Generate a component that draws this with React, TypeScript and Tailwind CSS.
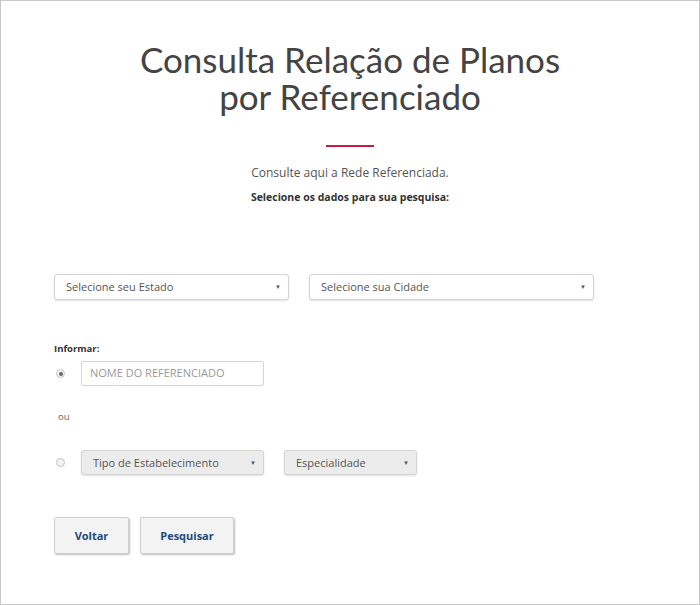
import React from 'react';

function Caret() {
  return <span className="text-[6px] text-[#555] leading-none">▼</span>;
}

function SelectBox({ label, className, gray }: { label: string; className: string; gray?: boolean }) {
  return (
    <div
      className={`flex items-center justify-between rounded-[3px] border border-[#d4d4d4] pl-[11px] pr-[7px] text-[11px] text-[#555] shadow-[0_1px_2px_rgba(0,0,0,0.12)] ${gray ? 'bg-[#ececec]' : 'bg-white'} ${className}`}
    >
      <span>{label}</span>
      <Caret />
    </div>
  );
}

function Radio({ checked }: { checked?: boolean }) {
  return (
    <span className="flex h-[9px] w-[9px] items-center justify-center rounded-full border border-[#c4c4c4] bg-[#f3f3f3]">
      {checked && <span className="h-[4px] w-[4px] rounded-full bg-[#666]" />}
    </span>
  );
}

export default function App() {
  return (
    <div
      className="h-[605px] w-[700px] border border-[#c8c8c8] bg-white"
      style={{ fontFamily: '"Open Sans", "Liberation Sans", sans-serif' }}
    >
      <h1
        className="pt-[40px] text-center text-[35px] leading-[37px] text-[#444]"
        style={{ fontFamily: 'Lato, "Open Sans", sans-serif' }}
      >
        Consulta Relação de Planos
        <br />
        por Referenciado
      </h1>

      <div className="mx-auto mt-[30px] h-[2px] w-[48px] bg-[#c41e3a]" />

      <p className="mt-[17px] text-center text-[12px] text-[#555]">Consulte aqui a Rede Referenciada.</p>
      <p className="mt-[8px] text-center text-[10.5px] font-bold text-[#333]">Selecione os dados para sua pesquisa:</p>

      <div className="mt-[68px] flex gap-[20px] pl-[53px]">
        <SelectBox label="Selecione seu Estado" className="h-[26px] w-[235px]" />
        <SelectBox label="Selecione sua Cidade" className="h-[26px] w-[285px]" />
      </div>

      <p className="mt-[42px] pl-[53px] text-[9.5px] font-bold text-[#333]">Informar:</p>

      <div className="mt-[5px] flex items-center pl-[55px]">
        <Radio checked />
        <div className="ml-[16px] flex h-[25px] w-[183px] items-center rounded-[2px] border border-[#d4d4d4] pl-[8px] text-[11px] text-[#999]">
          NOME DO REFERENCIADO
        </div>
      </div>

      <p className="mt-[24px] pl-[57px] text-[9.5px] text-[#666]">ou</p>

      <div className="mt-[26px] flex items-center pl-[55px]">
        <Radio />
        <SelectBox label="Tipo de Estabelecimento" className="ml-[16px] h-[25px] w-[183px]" gray />
        <SelectBox label="Especialidade" className="ml-[20px] h-[25px] w-[133px]" gray />
      </div>

      <div className="mt-[42px] flex gap-[11px] pl-[53px]">
        <button className="h-[37px] w-[75px] rounded-[2px] border border-[#cfcfcf] bg-[#f3f3f3] text-[11px] font-bold text-[#1f4a7a] shadow-[1px_1px_2px_rgba(0,0,0,0.25)]">
          Voltar
        </button>
        <button className="h-[37px] w-[94px] rounded-[2px] border border-[#cfcfcf] bg-[#f3f3f3] text-[11px] font-bold text-[#1f4a7a] shadow-[1px_1px_2px_rgba(0,0,0,0.25)]">
          Pesquisar
        </button>
      </div>
    </div>
  );
}
